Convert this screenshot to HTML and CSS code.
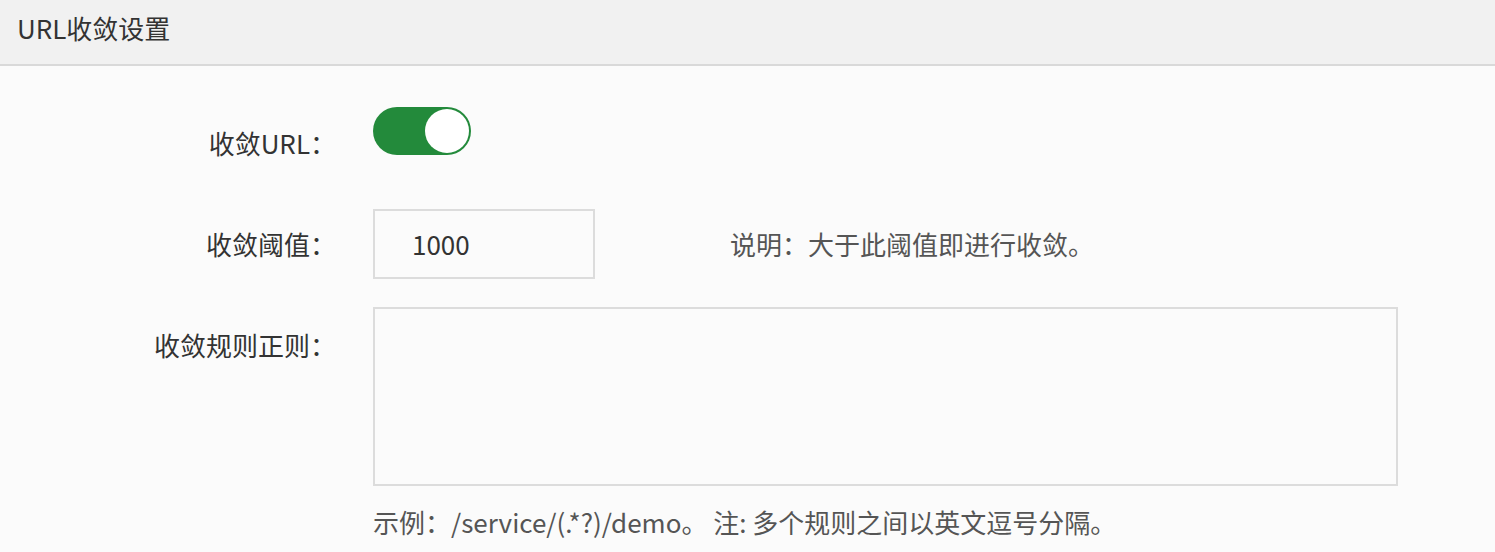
FILE: index.html
```html
<!DOCTYPE html>
<html lang="zh-CN">
<head>
<meta charset="utf-8">
<title>URL收敛设置</title>
<link rel="stylesheet" href="styles.css">
</head>
<body>
<div class="panel">
  <div class="panel-header">URL收敛设置</div>
  <div class="panel-body">
    <div class="row row-switch">
      <div class="label">收敛URL：</div>
      <div class="switch on"><span class="knob"></span></div>
    </div>
    <div class="row row-input">
      <div class="label">收敛阈值：</div>
      <div class="input">1000</div>
      <div class="note">说明：大于此阈值即进行收敛。</div>
    </div>
    <div class="row row-textarea">
      <div class="label">收敛规则正则：</div>
      <div class="field">
        <div class="textarea"></div>
        <div class="help">示例：/service/(.*?)/demo。 注: 多个规则之间以英文逗号分隔。</div>
      </div>
    </div>
  </div>
</div>
</body>
</html>
```

FILE: styles.css
```css
* { box-sizing: border-box; }
html, body { margin: 0; padding: 0; }
body {
  background: #fbfbfb;
  font-family: "Noto Sans CJK SC", "Open Sans", sans-serif;
  color: #333;
  font-size: 26px;
}
.panel-header {
  height: 66px;
  background: #f1f1f1;
  border-bottom: 2px solid #d9d9d9;
  padding-left: 17px;
  line-height: 56px;
  font-size: 26px;
  color: #333;
}
.panel-body {
  padding-top: 41px;
}
.row {
  display: flex;
  align-items: flex-start;
}
.label {
  width: 336px;
  margin-right: 37px;
  text-align: right;
  font-size: 26px;
  color: #333;
  flex: none;
}
.row-switch .label {
  line-height: 48px;
  padding-top: 12px;
}
.switch {
  width: 98px;
  height: 48px;
  border-radius: 24px;
  background: #238a3b;
  position: relative;
}
.switch .knob {
  position: absolute;
  top: 2px;
  right: 2px;
  width: 44px;
  height: 44px;
  border-radius: 50%;
  background: #fff;
}
.row-input {
  margin-top: 42px;
}
.row-input .label {
  line-height: 70px;
}
.input {
  width: 222px;
  height: 70px;
  border: 2px solid #dcdcdc;
  background: #fbfbfb;
  padding-left: 37px;
  line-height: 66px;
  font-size: 26px;
  color: #333;
}
.note {
  margin-left: 135px;
  line-height: 70px;
  font-size: 26px;
  color: #555;
}
.row-textarea {
  margin-top: 28px;
}
.row-textarea .label {
  line-height: 36px;
  padding-top: 20px;
}
.textarea {
  width: 1025px;
  height: 179px;
  border: 2px solid #dcdcdc;
  background: #fbfbfb;
}
.help {
  margin-top: 18px;
  line-height: 36px;
  font-size: 26px;
  color: #555;
}
```
